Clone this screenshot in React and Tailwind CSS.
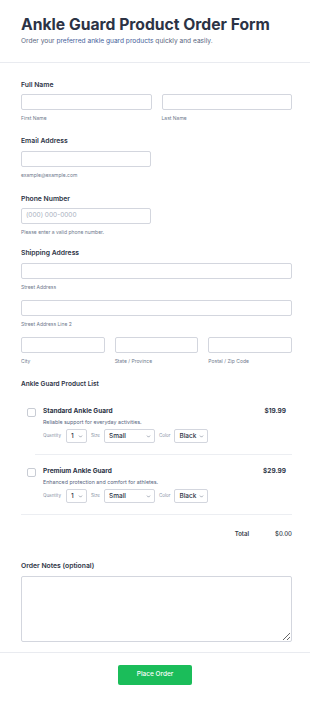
import { ChevronDown } from 'lucide-react';

const font = { fontFamily: 'Inter, "Noto Sans", sans-serif' };

function Field({ className = '', sub }) {
  return (
    <div className={className}>
      <div className="h-[16px] rounded-[2px] border border-[#d3d6de] bg-white" />
      {sub && <div className="mt-[4px] text-[5px] leading-[8px] text-[#6f7a8d]">{sub}</div>}
    </div>
  );
}

function Label({ children, className = '' }) {
  return <div className={`text-[6.8px] font-semibold leading-[10px] text-[#2c3345] ${className}`}>{children}</div>;
}

function Select({ value, width }) {
  return (
    <div className={`flex h-[14px] items-center justify-between gap-[2px] rounded-[2px] border border-[#d3d6de] bg-white pl-[4px] pr-[3px] ${width}`}>
      <span className="text-[6.5px] font-medium leading-[10px] text-[#2c3345]">{value}</span>
      <ChevronDown className="h-[5px] w-[5px] shrink-0 text-[#6f7a8d]" strokeWidth={3} />
    </div>
  );
}

function Product({ name, desc, price, last }) {
  return (
    <div className="ml-[6px]">
      <div className="flex pt-[12px] pb-[11px]">
        <div className="mr-[7px] mt-[1px] h-[9px] w-[9px] rounded-[2px] border border-[#c8ccd4] bg-white" />
        <div className="flex-1">
          <div className="flex items-center justify-between pr-[6px]">
            <span className="text-[6.5px] font-bold leading-[9px] text-[#2c3345]">{name}</span>
            <span className="text-[6.5px] font-bold leading-[9px] text-[#2c3345]">{price}</span>
          </div>
          <div className="mt-[2px] text-[5.3px] leading-[8px] text-[#57647e]">{desc}</div>
          <div className="mt-[3px] flex items-center">
            <span className="mr-[5px] text-[4.5px] text-[#8a93a6]">Quantity</span>
            <Select value="1" width="w-[21px]" />
            <span className="ml-[4px] mr-[4px] text-[4.5px] text-[#8a93a6]">Size</span>
            <Select value="Small" width="w-[51px]" />
            <span className="ml-[4px] mr-[4px] text-[4.5px] text-[#8a93a6]">Color</span>
            <Select value="Black" width="w-[34px]" />
          </div>
        </div>
      </div>
      {!last && <div className="ml-[8px] border-b border-[#eceef2]" />}
    </div>
  );
}

export default function App() {
  return (
    <div className="min-h-[701px] w-[310px] bg-white" style={font}>
      <div className="border-b border-[#e9ebf0] pl-[21px] pr-[18px] pt-[15px] pb-[15px]">
        <h1 className="text-[15.7px] font-bold leading-[20px] text-[#2c3345]">Ankle Guard Product Order Form</h1>
        <p className="mt-[1px] text-[6.6px] leading-[11px] text-[#57647e]">
          Order your <span className="text-[#45619a]">preferred ankle guard products</span> quickly and easily.
        </p>
      </div>

      <div className="pl-[21px] pr-[18px] pt-[17px]">
        <Label>Full Name</Label>
        <div className="mt-[4px] flex gap-[10px]">
          <Field className="flex-1" sub="First Name" />
          <Field className="flex-1" sub="Last Name" />
        </div>

        <Label className="mt-[14px]">Email Address</Label>
        <Field className="mt-[5px] w-[130px]" sub="example@example.com" />

        <Label className="mt-[15px]">Phone Number</Label>
        <div className="mt-[4px] flex h-[16px] w-[130px] items-center rounded-[2px] border border-[#d3d6de] px-[4px] text-[6.5px] text-[#a9b0be]">
          (000) 000-0000
        </div>
        <div className="mt-[4px] text-[5px] leading-[8px] text-[#6f7a8d]">Please enter a valid phone number.</div>

        <Label className="mt-[12px]">Shipping Address</Label>
        <Field className="mt-[5px]" sub="Street Address" />
        <Field className="mt-[9px]" sub="Street Address Line 2" />
        <div className="mt-[9px] grid grid-cols-3 gap-[10px]">
          <Field sub="City" />
          <Field sub="State / Province" />
          <Field sub="Postal / Zip Code" />
        </div>

        <div className="mt-[15px] text-[6.5px] font-semibold leading-[9px] text-[#2c3345]">Ankle Guard Product List</div>
        <div className="mt-[6px] border-b border-[#eceef2]">
          <Product name="Standard Ankle Guard" desc="Reliable support for everyday activities." price="$19.99" />
          <Product name="Premium Ankle Guard" desc="Enhanced protection and comfort for athletes." price="$29.99" last />
        </div>
        <div className="flex justify-end pt-[14px] text-[6px] text-[#333a48]">
          <span className="mr-[26px] font-semibold">Total</span>
          <span className="font-medium">$0.00</span>
        </div>

        <Label className="mt-[23px]">Order Notes (optional)</Label>
        <textarea
          readOnly
          className="mt-[5px] block h-[66px] w-full rounded-[2px] border border-[#d3d6de] bg-white outline-none"
        />
      </div>

      <div className="mt-[10px] flex justify-center border-t border-[#e9ebf0] pt-[12px]">
        <button className="h-[20px] w-[74px] rounded-[2px] bg-[#1bbd5a] text-[6.5px] font-medium text-white">
          Place Order
        </button>
      </div>
    </div>
  );
}
